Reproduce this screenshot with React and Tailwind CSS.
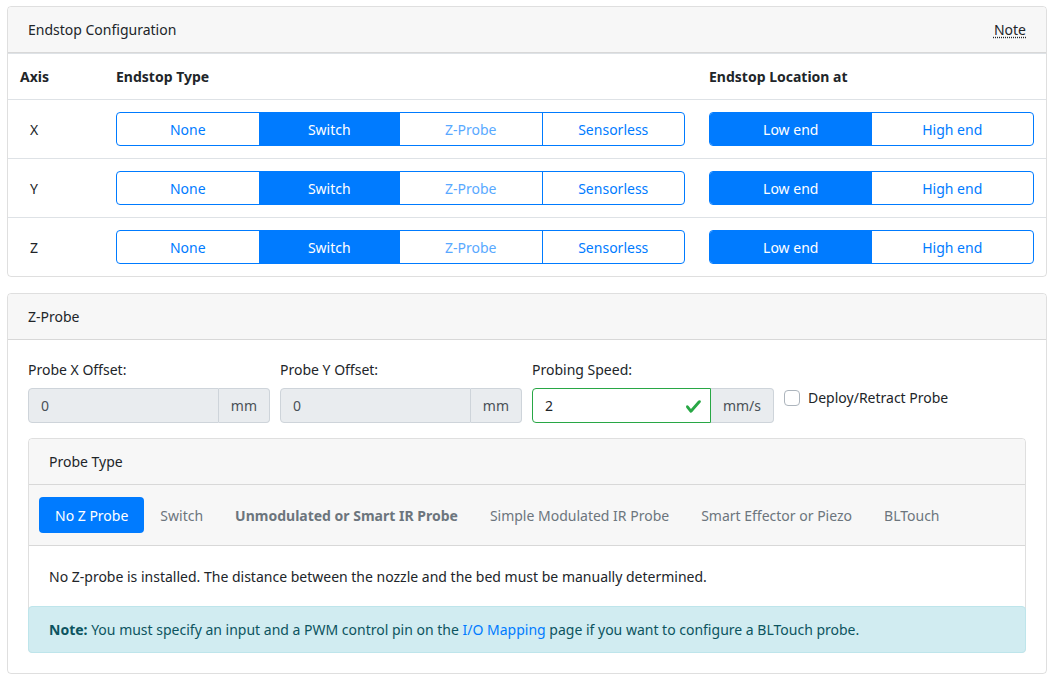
import React from "react";

const font = "font-['Noto_Sans','Liberation_Sans',sans-serif]";

const AxisRow = ({ axis }) => (
  <div className="grid grid-cols-[96px_593px_1fr] border-t border-[#dee2e6]">
    <div className="pl-[22px] pr-3 py-3 flex items-center">{axis}</div>
    <div className="px-3 py-3">
      <div className="flex h-[34px] border border-[#007bff] rounded-[4px] overflow-hidden">
        <button className="flex-1 text-[#007bff]">None</button>
        <button className="flex-1 bg-[#007bff] text-white">Switch</button>
        <button className="flex-1 text-[#59a9ff]">Z-Probe</button>
        <button className="flex-1 text-[#007bff] border-l border-[#007bff]">Sensorless</button>
      </div>
    </div>
    <div className="px-3 py-3">
      <div className="flex h-[34px] border border-[#007bff] rounded-[4px] overflow-hidden">
        <button className="flex-1 bg-[#007bff] text-white">Low end</button>
        <button className="flex-1 text-[#007bff]">High end</button>
      </div>
    </div>
  </div>
);

const OffsetInput = ({ label, value, unit, valid }) => (
  <div className="px-[5px]">
    <label className="block mb-2">{label}</label>
    <div className="flex h-[35px]">
      <div
        className={
          valid
            ? "relative flex-1 flex items-center px-3 bg-white border border-[#28a745] rounded-l-[4px]"
            : "relative flex-1 flex items-center px-3 bg-[#e9ecef] border border-[#ced4da] rounded-l-[4px] text-[#495057]"
        }
      >
        {value}
        {valid && (
          <svg className="absolute right-[8px] top-[9px] w-[17px] h-[17px]" viewBox="0 0 8 8">
            <path
              fill="#28a745"
              d="M2.3 6.73L.6 4.53c-.4-1.04.46-1.4 1.1-.8l1.1 1.4 3.4-3.8c.6-.63 1.6-.27 1.2.7l-4 4.6c-.43.5-.8.4-1.1.1z"
            />
          </svg>
        )}
      </div>
      <div className="flex items-center px-3 bg-[#e9ecef] border border-[#ced4da] border-l-0 rounded-r-[4px] text-[#495057]">
        {unit}
      </div>
    </div>
  </div>
);

const pills = [
  "Switch",
  "Unmodulated or Smart IR Probe",
  "Simple Modulated IR Probe",
  "Smart Effector or Piezo",
  "BLTouch",
];

export default function App() {
  return (
    <div className={`${font} bg-white pl-[7px] pr-[8px] pt-[6px] pb-[7px] text-[14px] leading-[1.5] text-[#212529]`}>
      {/* Endstop card */}
      <div className="border border-[rgba(0,0,0,0.125)] rounded-[4px] mb-4">
        <div className="flex justify-between px-5 py-3 bg-[#f7f7f7] border-b border-[rgba(0,0,0,0.125)] rounded-t-[4px]">
          <span>Endstop Configuration</span>
          <span className="underline decoration-dotted underline-offset-2">Note</span>
        </div>
        <div className="grid grid-cols-[96px_593px_1fr] font-bold border-t border-[#dee2e6]">
          <div className="p-3">Axis</div>
          <div className="p-3">Endstop Type</div>
          <div className="p-3">Endstop Location at</div>
        </div>
        <AxisRow axis="X" />
        <AxisRow axis="Y" />
        <AxisRow axis="Z" />
      </div>

      {/* Z-Probe card */}
      <div className="border border-[rgba(0,0,0,0.125)] rounded-[4px]">
        <div className="px-5 py-3 bg-[#f7f7f7] border-b border-[rgba(0,0,0,0.125)] rounded-t-[4px]">
          Z-Probe
        </div>
        <div className="px-5 pt-[19px] pb-5">
          <div className="grid grid-cols-4 mx-[-5px] mb-[15px]">
            <OffsetInput label="Probe X Offset:" value="0" unit="mm" />
            <OffsetInput label="Probe Y Offset:" value="0" unit="mm" />
            <OffsetInput label="Probing Speed:" value="2" unit="mm/s" valid />
            <div className="px-[5px] pt-[28px]">
              <label className="flex items-center gap-2">
                <span className="w-4 h-4 border border-[#adb5bd] rounded-[4px] bg-white"></span>
                <span>Deploy/Retract Probe</span>
              </label>
            </div>
          </div>

          <div className="border border-[rgba(0,0,0,0.125)] rounded-[4px]">
            <div className="px-5 py-3 bg-[#f7f7f7] border-b border-[rgba(0,0,0,0.125)] rounded-t-[4px]">
              Probe Type
            </div>
            <div className="flex items-center px-[10px] py-3 bg-[#f7f7f7] border-b border-[rgba(0,0,0,0.125)]">
              <span className="flex items-center h-[36px] px-4 bg-[#007bff] text-white rounded-[4px]">No Z Probe</span>
              {pills.map((p, i) => (
                <span
                  key={p}
                  className={
                    i === 1
                      ? "flex items-center h-[36px] px-4 text-[#6c757d] font-bold"
                      : "flex items-center h-[36px] px-4 text-[#6c757d]"
                  }
                >
                  {p}
                </span>
              ))}
            </div>
            <div className="px-5 pt-5 pb-[19px]">
              No Z-probe is installed. The distance between the nozzle and the bed must be manually determined.
            </div>
            <div className="px-5 py-3 bg-[#d1ecf1] border border-[#bee5eb] rounded-[4px] text-[#0c5460] mx-[-1px] mb-[-1px]">
              <strong>Note:</strong> You must specify an input and a PWM control pin on the{" "}
              <a className="text-[#007bff]">I/O Mapping</a> page if you want to configure a BLTouch probe.
            </div>
          </div>
        </div>
      </div>
    </div>
  );
}
